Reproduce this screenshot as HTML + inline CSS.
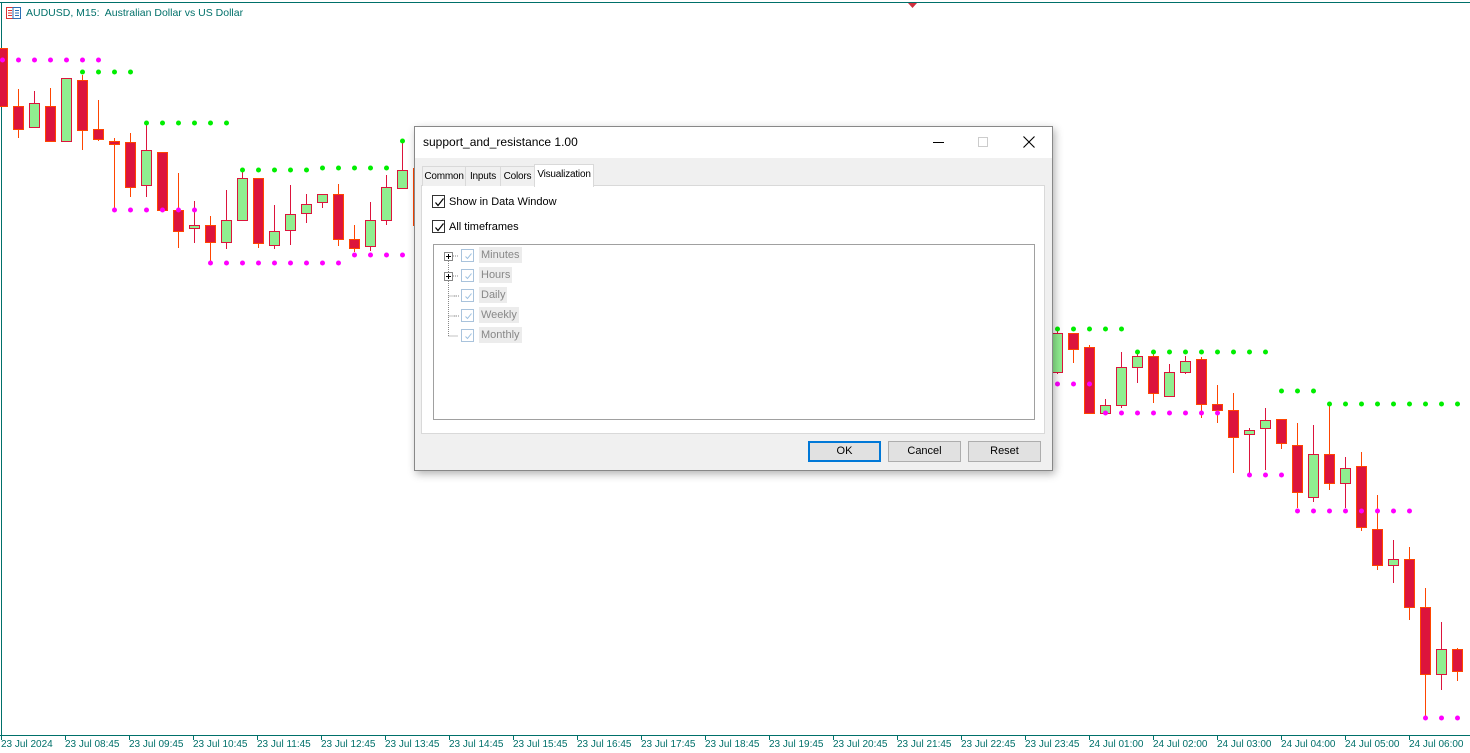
<!DOCTYPE html>
<html><head><meta charset="utf-8"><style>
*{margin:0;padding:0;box-sizing:border-box}
body{width:1470px;height:753px;overflow:hidden;background:#fff;font-family:"Liberation Sans",sans-serif;position:relative}
.t{position:absolute;font-size:10px;color:#00706a;white-space:nowrap}
#dlg{position:absolute;left:414px;top:126px;width:639px;height:345px;background:#f0f0f0;border:1px solid #888;box-shadow:2px 3px 8px rgba(0,0,0,.3);font-size:11px;color:#000}
.ab{position:absolute}
.tab{position:absolute;top:39px;height:20px;border:1px solid #d9d9d9;border-bottom:none;background:#f0f0f0;padding:4px 0 0;text-align:center;font-size:10px;letter-spacing:-0.2px;white-space:nowrap;overflow:hidden}
.cb{position:absolute;width:13px;height:13px;border:1px solid #333;background:#fff}
.cb svg{position:absolute;left:1px;top:1px}
.btn{position:absolute;top:314px;height:21px;width:73px;border:1px solid #adadad;background:#e1e1e1;text-align:center;line-height:19px;font-size:11px}
.tc{position:absolute;width:13px;height:13px;border:1px solid #a9c3dc;background:#fff}
.tc svg{position:absolute;left:1px;top:1px}
.tl{position:absolute;background:#ececec;color:#888;padding:2px 2px;font-size:11px}
</style></head><body>
<svg id="ch" width="1470" height="753" style="position:absolute;left:0;top:0"></svg>
<div class="t" style="left:26px;top:7px;font-size:10.5px">AUDUSD, M15:&nbsp; Australian Dollar vs US Dollar</div>
<svg style="position:absolute;left:6px;top:7px" width="15" height="12"><rect x="0.5" y="0.5" width="14" height="11" fill="#fff" stroke="#d33"/><rect x="7" y="0.5" width="7.5" height="11" fill="#fff" stroke="#2a6fb5"/><path d="M2 3.5h4M2 6h4M2 8.5h4" stroke="#d33"/><path d="M9 3.5h4M9 6h4M9 8.5h4" stroke="#2a6fb5"/></svg>
<div id="lbl"></div>

<div id="dlg">
 <div class="ab" style="left:0;top:0;width:637px;height:31px;background:#fff"></div>
 <div class="ab" style="left:8px;top:8px;font-size:12px">support_and_resistance 1.00</div>
 <div class="ab" style="left:518px;top:15px;width:11px;height:1px;background:#000"></div>
 <div class="ab" style="left:563px;top:10px;width:10px;height:10px;border:1px solid #ccc"></div>
 <svg class="ab" style="left:608px;top:9px" width="12" height="12"><path d="M0.5 0.5L11.5 11.5M11.5 0.5L0.5 11.5" stroke="#000" stroke-width="1.1"/></svg>
 <div class="ab" style="left:6px;top:58px;width:624px;height:249px;background:#fff;border:1px solid #d9d9d9"></div>
 <div class="tab" style="left:7px;width:44px">Common</div>
 <div class="tab" style="left:50px;width:36px">Inputs</div>
 <div class="tab" style="left:85px;width:35px">Colors</div>
 <div class="tab" style="left:119px;top:37px;height:23px;width:60px;background:#fff;padding-top:4px">Visualization</div>
 <div class="cb" style="left:17px;top:68px"><svg width="11" height="11"><path d="M1.5 5.5L4 8.5L9.5 1.5" stroke="#000" fill="none" stroke-width="1.2"/></svg></div>
 <div class="ab" style="left:34px;top:69px">Show in Data Window</div>
 <div class="cb" style="left:17px;top:93px"><svg width="11" height="11"><path d="M1.5 5.5L4 8.5L9.5 1.5" stroke="#000" fill="none" stroke-width="1.2"/></svg></div>
 <div class="ab" style="left:34px;top:94px">All timeframes</div>
 <div class="ab" style="left:18px;top:117px;width:602px;height:176px;background:#fff;border:1px solid #a0a0a0"></div>
 <svg class="ab" style="left:25px;top:122px" width="50" height="100"><g stroke="#888" stroke-dasharray="1,1" fill="none"><path d="M8.5 10V87M8.5 87h10M14 67h5M14 47h5M13 27h6M13 7h6"/><path d="M8.5 47h8M8.5 67h8"/></g><rect x="4.5" y="3.5" width="8" height="8" fill="#fff" stroke="#888"/><path d="M6 7.5h5M8.5 5v5" stroke="#000"/><rect x="4.5" y="23.5" width="8" height="8" fill="#fff" stroke="#888"/><path d="M6 27.5h5M8.5 25v5" stroke="#000"/></svg>
 <div class="tc" style="left:46px;top:122px"><svg width="11" height="11"><path d="M2.5 5.5L4.5 7.5L8.5 2.5" stroke="#9cc0e0" fill="none"/></svg></div><div class="tl" style="left:64px;top:120px">Minutes</div>
 <div class="tc" style="left:46px;top:142px"><svg width="11" height="11"><path d="M2.5 5.5L4.5 7.5L8.5 2.5" stroke="#9cc0e0" fill="none"/></svg></div><div class="tl" style="left:64px;top:140px">Hours</div>
 <div class="tc" style="left:46px;top:162px"><svg width="11" height="11"><path d="M2.5 5.5L4.5 7.5L8.5 2.5" stroke="#9cc0e0" fill="none"/></svg></div><div class="tl" style="left:64px;top:160px">Daily</div>
 <div class="tc" style="left:46px;top:182px"><svg width="11" height="11"><path d="M2.5 5.5L4.5 7.5L8.5 2.5" stroke="#9cc0e0" fill="none"/></svg></div><div class="tl" style="left:64px;top:180px">Weekly</div>
 <div class="tc" style="left:46px;top:202px"><svg width="11" height="11"><path d="M2.5 5.5L4.5 7.5L8.5 2.5" stroke="#9cc0e0" fill="none"/></svg></div><div class="tl" style="left:64px;top:200px">Monthly</div>
 <div class="btn" style="left:393px;border:2px solid #0078d7;line-height:17px">OK</div>
 <div class="btn" style="left:473px">Cancel</div>
 <div class="btn" style="left:553px">Reset</div>
</div>
<script>
var s='';
s+='<path d="M0 2.5H1470M1.5 2V736M0 735.5H1470" stroke="#00706a" fill="none"/>';
s+='<path d="M908 3h9l-4.5 5z" fill="#d03040"/>';
var labs=["23 Jul 2024","23 Jul 08:45","23 Jul 09:45","23 Jul 10:45","23 Jul 11:45","23 Jul 12:45","23 Jul 13:45","23 Jul 14:45","23 Jul 15:45","23 Jul 16:45","23 Jul 17:45","23 Jul 18:45","23 Jul 19:45","23 Jul 20:45","23 Jul 21:45","23 Jul 22:45","23 Jul 23:45","24 Jul 01:00","24 Jul 02:00","24 Jul 03:00","24 Jul 04:00","24 Jul 05:00","24 Jul 06:00"];
var h='';
labs.forEach(function(l,i){var x=1+64*i;s+='<path d="M'+(x+.5)+' 735V740" stroke="#00706a"/>';h+='<div class="t" style="left:'+x+'px;top:739px">'+l+'</div>';});
document.getElementById('lbl').innerHTML=h;
var C=[[2,48,106,48,106,0],[18,106,129,89,138,0],[34,103,127,91,127,1],[50,106,141,88,141,0],[66,78,141,78,141,1],[82,80,130,75,150,0],[98,129,139,100,141,0],[114,141,144,138,210,0],[130,142,187,133,197,0],[146,150,185,123,197,1],[162,152,210,152,212,0],[178,210,231,173,248,0],[194,225,228,201,243,1],[210,225,242,216,262,0],[226,220,242,190,249,1],[242,178,220,170,220,1],[258,178,243,178,248,0],[274,231,245,205,249,1],[290,214,230,185,245,1],[306,204,213,194,223,1],[322,194,202,194,208,1],[338,194,239,184,246,0],[354,239,248,225,252,0],[370,220,246,202,251,1],[386,187,220,175,225,1],[402,170,188,141,188,1],[418,168,225,160,230,0],
[1057,333,372,329,374,1],[1073,333,349,333,363,0],[1089,347,413,345,413,0],[1105,405,413,399,413,1],[1121,367,405,352,408,1],[1137,356,367,352,383,1],[1153,356,393,352,403,0],[1169,372,396,364,396,1],[1185,361,372,356,374,1],[1201,359,404,357,418,0],[1217,404,410,385,423,0],[1233,410,437,393,473,0],[1249,430,434,428,475,1],[1265,420,428,408,470,1],[1281,419,443,419,449,0],[1297,445,492,423,508,0],[1313,454,497,425,502,1],[1329,454,483,404,490,0],[1345,468,483,457,508,1],[1361,466,527,452,531,0],[1377,529,565,495,570,0],[1393,559,565,540,583,1],[1409,559,607,547,620,0],[1425,607,674,588,718,0],[1441,649,674,622,690,1],[1457,649,671,648,681,0]];
C.forEach(function(c){var x=c[0];s+='<path d="M'+(x+.5)+' '+c[3]+'V'+c[4]+'" stroke="'+(c[5]?'#dc143c':'#ff4500')+'"/>';
s+='<rect x="'+(x-4.5)+'" y="'+(c[1]+.5)+'" width="10" height="'+Math.max(c[2]-c[1],2)+'" fill="'+(c[5]?'#90ee90':'#dc143c')+'" stroke="'+(c[5]?'#dc143c':'#ff4500')+'"/>';});
function d(y,xs,col){xs.forEach(function(x){s+='<circle cx="'+(x+.5)+'" cy="'+y+'" r="2.5" fill="'+col+'"/>';});}
function r(a,b){var o=[];for(var x=a;x<=b;x+=16)o.push(x);return o;}
var M='#ff00ff',G='#00ee00';
d(60,r(2,98),M);d(72,r(82,130),G);d(123,r(146,226),G);d(210,r(114,194),M);d(263,r(210,338),M);d(170,r(242,306),G);d(168,r(322,386),G);d(255,r(354,402),M);d(141,[402],G);
d(329,r(1057,1121),G);d(352,r(1137,1265),G);d(384,r(1057,1089),M);d(413,r(1105,1217),M);d(391,r(1281,1313),G);d(404,r(1329,1457),G);d(475,r(1249,1281),M);d(511,r(1297,1409),M);d(718,r(1425,1457),M);
document.getElementById('ch').innerHTML=s;
</script>
</body></html>
